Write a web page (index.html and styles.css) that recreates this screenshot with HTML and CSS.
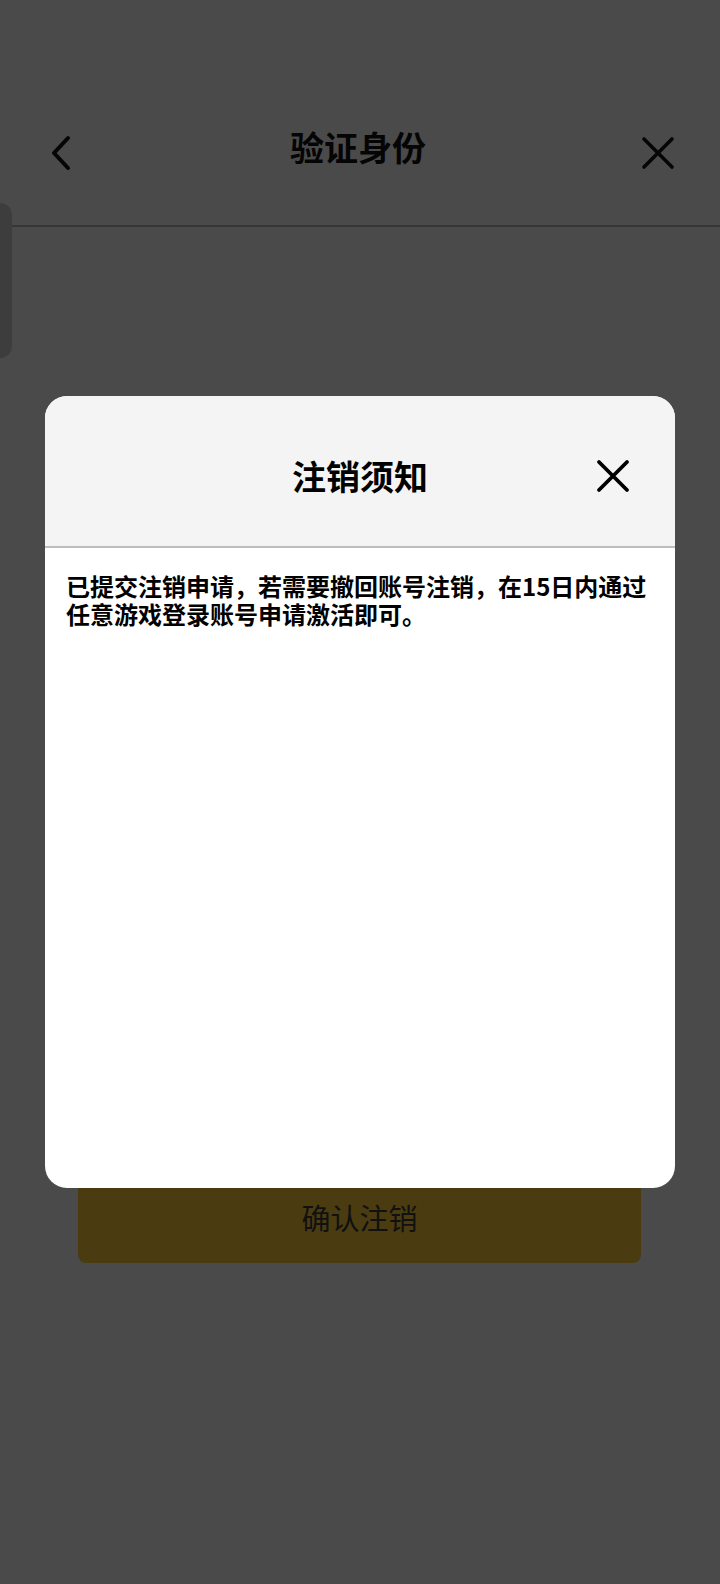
FILE: index.html
```html
<!DOCTYPE html>
<html lang="zh-CN">
<head>
<meta charset="utf-8">
<title>验证身份</title>
<link rel="stylesheet" href="styles.css">
</head>
<body>
<div class="page">
  <header class="topbar">
    <div class="topbar-row">
      <span class="icon-btn back">
        <svg width="24" height="36" viewBox="0 0 24 36"><polyline points="19,3 5,18 19,33" fill="none" stroke="#050505" stroke-width="4" stroke-linecap="round" stroke-linejoin="round"/></svg>
      </span>
      <h1 class="topbar-title">验证身份</h1>
      <span class="icon-btn close">
        <svg width="34" height="34" viewBox="0 0 34 34"><path d="M3 3 L31 31 M31 3 L3 31" fill="none" stroke="#050505" stroke-width="3.6" stroke-linecap="round"/></svg>
      </span>
    </div>
  </header>
  <div class="side-tab"></div>
  <main class="content">
    <button class="confirm-btn">确认注销</button>
  </main>
</div>

<div class="modal">
  <div class="modal-head">
    <h2 class="modal-title">注销须知</h2>
    <span class="modal-close">
      <svg width="34" height="34" viewBox="0 0 34 34"><path d="M3 3 L31 31 M31 3 L3 31" fill="none" stroke="#000" stroke-width="3.8" stroke-linecap="round"/></svg>
    </span>
  </div>
  <div class="modal-body">
    <p class="notice">已提交注销申请，若需要撤回账号注销，在15日内通过任意游戏登录账号申请激活即可。</p>
  </div>
</div>
</body>
</html>
```

FILE: styles.css
```css
html, body {
  margin: 0;
  padding: 0;
}
body {
  width: 720px;
  height: 1584px;
  background: #4a4a4a;
  font-family: "Noto Sans CJK SC", "Noto Sans", sans-serif;
  position: relative;
  overflow: hidden;
}
.page {
  position: relative;
}
.topbar {
  height: 227px;
  box-sizing: border-box;
  padding: 118px 45px 0 49px;
  border-bottom: 2px solid #363636;
}
.topbar-row {
  height: 70px;
  display: flex;
  align-items: center;
  justify-content: space-between;
}
.icon-btn {
  display: flex;
  align-items: center;
}
.topbar-title {
  margin: 0;
  font-size: 34px;
  font-weight: 700;
  line-height: 1;
  color: #050505;
  position: relative;
  top: -6px;
  left: 1px;
}
.side-tab {
  position: absolute;
  left: -14px;
  top: 203px;
  width: 26px;
  height: 155px;
  border-radius: 12px;
  background: #3d3d3d;
}
.content {
  padding: 948px 79px 0 78px;
}
.confirm-btn {
  display: block;
  width: 100%;
  height: 88px;
  border: none;
  border-radius: 8px;
  background: #4a3c10;
  color: #111;
  font-family: "Noto Sans CJK SC", sans-serif;
  font-size: 29px;
  font-weight: 400;
  padding: 0 0 4px;
}
.modal {
  position: absolute;
  left: 45px;
  top: 396px;
  width: 630px;
  height: 792px;
  background: #fff;
  border-radius: 22px;
  overflow: hidden;
}
.modal-head {
  height: 152px;
  box-sizing: border-box;
  background: #f4f4f4;
  border-bottom: 2px solid #bdbdbd;
  display: flex;
  align-items: center;
  justify-content: center;
  position: relative;
  padding-top: 10px;
}
.modal-title {
  margin: 0;
  font-size: 34px;
  font-weight: 700;
  line-height: 1;
  color: #000;
}
.modal-close {
  position: absolute;
  right: 45px;
  top: 63px;
  display: flex;
}
.modal-body {
  padding: 24px 18px 0 21px;
}
.notice {
  margin: 0;
  font-size: 24px;
  font-weight: 700;
  line-height: 28px;
  color: #000;
}
```
